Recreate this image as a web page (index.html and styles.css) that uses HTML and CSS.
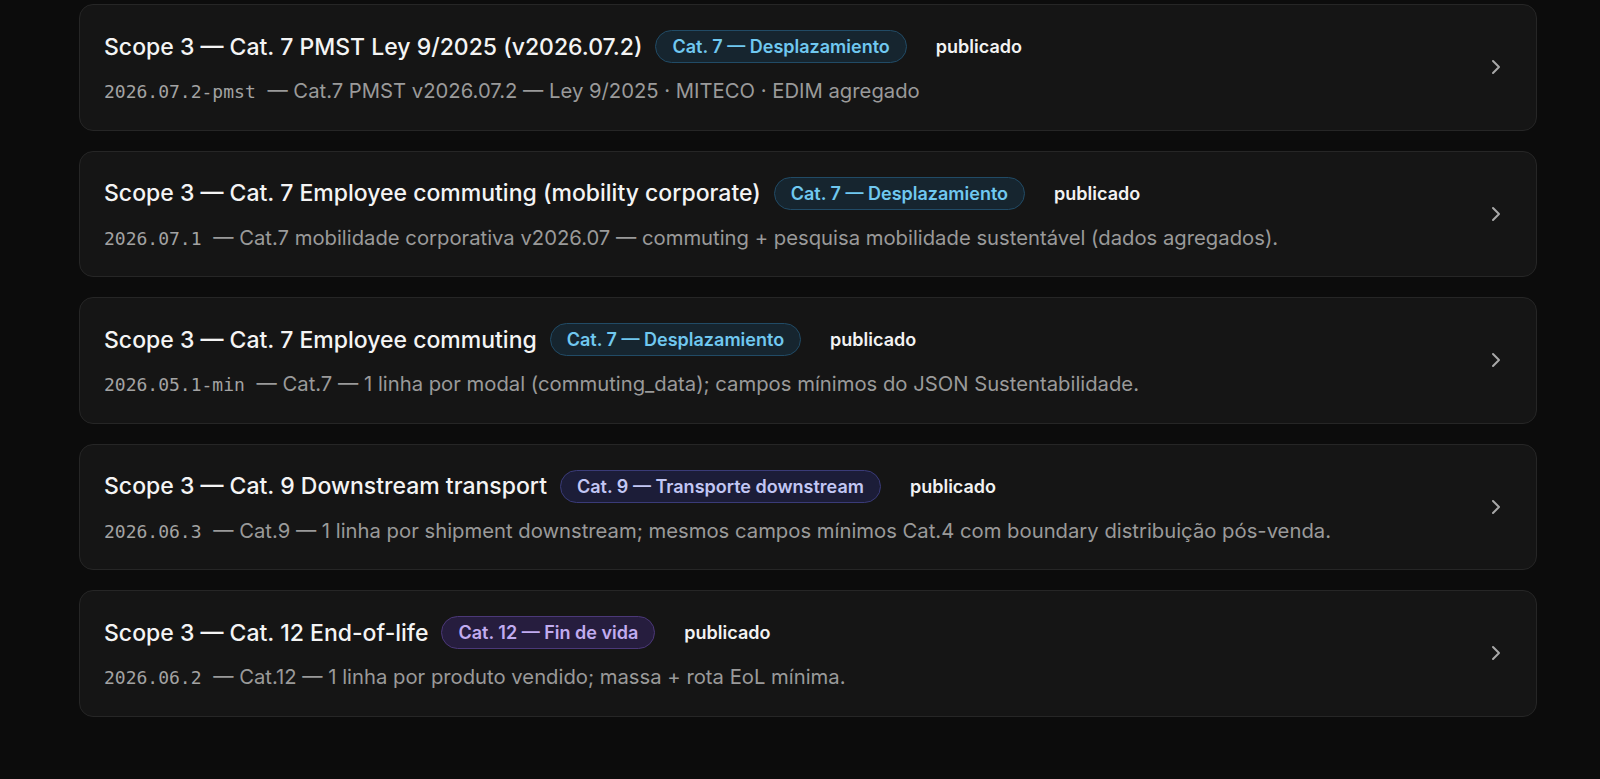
FILE: index.html
```html
<!DOCTYPE html>
<html lang="es">
<head>
<meta charset="utf-8">
<title>Scope 3</title>
<link rel="stylesheet" href="styles.css">
</head>
<body>
<main class="list">
  <a class="card">
    <div class="card-main">
      <div class="title-row">
        <span class="title">Scope 3 — Cat. 7 PMST Ley 9/2025 (v2026.07.2)</span>
        <span class="badge badge-sky">Cat. 7 — Desplazamiento</span>
        <span class="status">publicado</span>
      </div>
      <div class="sub"><span class="mono">2026.07.2-pmst</span> — Cat.7 PMST v2026.07.2 — Ley 9/2025 · MITECO · EDIM agregado</div>
    </div>
    <svg class="chev" viewBox="0 0 24 24" width="24" height="24"><path d="M9 6l6 6-6 6"/></svg>
  </a>
  <a class="card">
    <div class="card-main">
      <div class="title-row">
        <span class="title">Scope 3 — Cat. 7 Employee commuting (mobility corporate)</span>
        <span class="badge badge-sky">Cat. 7 — Desplazamiento</span>
        <span class="status">publicado</span>
      </div>
      <div class="sub"><span class="mono">2026.07.1</span> — Cat.7 mobilidade corporativa v2026.07 — commuting + pesquisa mobilidade sustentável (dados agregados).</div>
    </div>
    <svg class="chev" viewBox="0 0 24 24" width="24" height="24"><path d="M9 6l6 6-6 6"/></svg>
  </a>
  <a class="card">
    <div class="card-main">
      <div class="title-row">
        <span class="title">Scope 3 — Cat. 7 Employee commuting</span>
        <span class="badge badge-sky">Cat. 7 — Desplazamiento</span>
        <span class="status">publicado</span>
      </div>
      <div class="sub"><span class="mono">2026.05.1-min</span> — Cat.7 — 1 linha por modal (commuting_data); campos mínimos do JSON Sustentabilidade.</div>
    </div>
    <svg class="chev" viewBox="0 0 24 24" width="24" height="24"><path d="M9 6l6 6-6 6"/></svg>
  </a>
  <a class="card">
    <div class="card-main">
      <div class="title-row">
        <span class="title">Scope 3 — Cat. 9 Downstream transport</span>
        <span class="badge badge-indigo">Cat. 9 — Transporte downstream</span>
        <span class="status">publicado</span>
      </div>
      <div class="sub"><span class="mono">2026.06.3</span> — Cat.9 — 1 linha por shipment downstream; mesmos campos mínimos Cat.4 com boundary distribuição pós-venda.</div>
    </div>
    <svg class="chev" viewBox="0 0 24 24" width="24" height="24"><path d="M9 6l6 6-6 6"/></svg>
  </a>
  <a class="card">
    <div class="card-main">
      <div class="title-row">
        <span class="title">Scope 3 — Cat. 12 End-of-life</span>
        <span class="badge badge-violet">Cat. 12 — Fin de vida</span>
        <span class="status">publicado</span>
      </div>
      <div class="sub"><span class="mono">2026.06.2</span> — Cat.12 — 1 linha por produto vendido; massa + rota EoL mínima.</div>
    </div>
    <svg class="chev" viewBox="0 0 24 24" width="24" height="24"><path d="M9 6l6 6-6 6"/></svg>
  </a>
</main>
</body>
</html>
```
FILE: styles.css
```css
* { box-sizing: border-box; }
html, body { margin: 0; padding: 0; }
body {
  background: #0c0c0c;
  font-family: Inter, "Noto Sans", sans-serif;
  color: #f5f5f5;
  height: 779px;
  overflow: hidden;
}
.list {
  display: flex;
  flex-direction: column;
  gap: 20px;
  padding: 4px 0 0 79px;
  width: 1537px;
}
.card {
  display: flex;
  align-items: center;
  height: 126.5px;
  padding: 0 28px 0 24px;
  background: #151515;
  border: 1px solid #262626;
  border-radius: 14px;
  text-decoration: none;
  color: inherit;
}
.card-main {
  flex: 1;
  display: flex;
  flex-direction: column;
  gap: 15px;
  margin-top: 1px;
}
.title-row {
  display: flex;
  align-items: center;
  gap: 13px;
  height: 33px;
}
.title {
  font-size: 23px;
  font-weight: 500;
  color: #f4f4f4;
}
.badge {
  display: inline-flex;
  align-items: center;
  height: 33px;
  padding: 0 16px;
  border-radius: 999px;
  font-size: 18px;
  font-weight: 600;
  border: 1px solid;
}
.badge-sky { background: #16252f; border-color: #214b66; color: #70c8f0; }
.badge-indigo { background: #1c1d38; border-color: #3a3b78; color: #c2c7f4; }
.badge-violet { background: #261d3e; border-color: #4b3878; color: #c1acf0; }
.status {
  font-size: 18px;
  font-weight: 600;
  color: #f2f2f2;
  padding: 0 16px;
}
.sub {
  font-size: 20.25px;
  line-height: 26px;
  color: #9a9a9a;
}
.mono {
  font-family: "DejaVu Sans Mono", "Liberation Mono", monospace;
  font-size: 18px;
  color: #a3a3a3;
  margin-right: 6px;
}
.chev {
  flex: none;
  fill: none;
  stroke: #a8a8a8;
  stroke-width: 2;
  stroke-linecap: round;
  stroke-linejoin: round;
}
```
